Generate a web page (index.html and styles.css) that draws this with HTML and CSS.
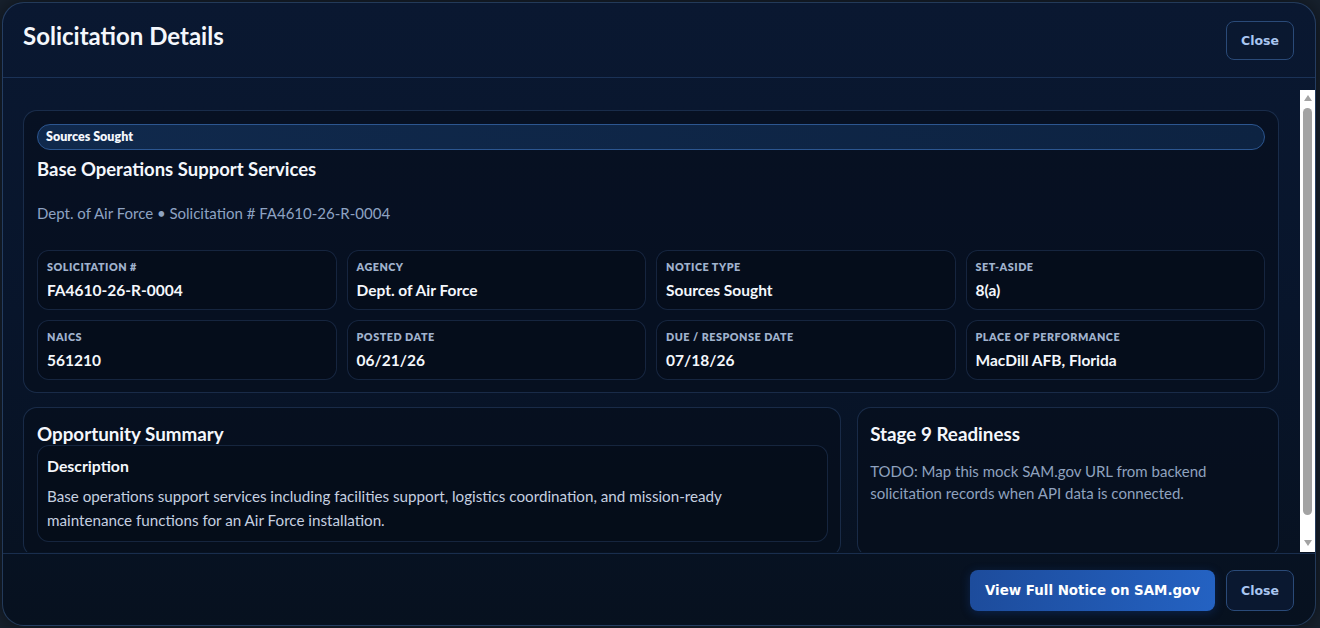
FILE: index.html
```html
<!DOCTYPE html>
<html lang="en">
<head>
<meta charset="utf-8">
<title>Solicitation Details</title>
<link rel="stylesheet" href="styles.css">
</head>
<body>
<div class="modal">
  <header class="modal-header">
    <h1 class="modal-title">Solicitation Details</h1>
    <button class="btn btn-ghost">Close</button>
  </header>
  <div class="modal-body">
    <div class="scroll">
      <section class="card card-main">
        <div class="badge">Sources Sought</div>
        <h2 class="sol-title">Base Operations Support Services</h2>
        <p class="sol-sub">Dept. of Air Force • Solicitation # FA4610-26-R-0004</p>
        <div class="facts">
          <div class="fact"><div class="fact-label">Solicitation #</div><div class="fact-value">FA4610-26-R-0004</div></div>
          <div class="fact"><div class="fact-label">Agency</div><div class="fact-value">Dept. of Air Force</div></div>
          <div class="fact"><div class="fact-label">Notice Type</div><div class="fact-value">Sources Sought</div></div>
          <div class="fact"><div class="fact-label">Set-Aside</div><div class="fact-value">8(a)</div></div>
          <div class="fact"><div class="fact-label">NAICS</div><div class="fact-value">561210</div></div>
          <div class="fact"><div class="fact-label">Posted Date</div><div class="fact-value">06/21/26</div></div>
          <div class="fact"><div class="fact-label">Due / Response Date</div><div class="fact-value">07/18/26</div></div>
          <div class="fact"><div class="fact-label">Place of Performance</div><div class="fact-value">MacDill AFB, Florida</div></div>
        </div>
      </section>
      <div class="lower">
        <section class="card card-summary">
          <h3 class="section-title">Opportunity Summary</h3>
          <div class="desc-box">
            <h4 class="desc-title">Description</h4>
            <p class="desc-text">Base operations support services including facilities support, logistics coordination, and mission-ready maintenance functions for an Air Force installation.</p>
          </div>
        </section>
        <section class="card card-stage">
          <h3 class="section-title">Stage 9 Readiness</h3>
          <p class="stage-text">TODO: Map this mock SAM.gov URL from backend solicitation records when API data is connected.</p>
        </section>
      </div>
    </div>
    <div class="scrollbar" aria-hidden="true">
      <span class="sb-arrow sb-up"></span>
      <span class="sb-thumb"></span>
      <span class="sb-arrow sb-down"></span>
    </div>
  </div>
  <footer class="modal-footer">
    <button class="btn btn-primary">View Full Notice on SAM.gov</button>
    <button class="btn btn-ghost">Close</button>
  </footer>
</div>
</body>
</html>
```
FILE: styles.css
```css
* { box-sizing: border-box; }
html, body { margin: 0; padding: 0; }
body {
  width: 1320px;
  height: 628px;
  overflow: hidden;
  background: #18222f;
  font-family: Lato, "Noto Sans", sans-serif;
  color: #f1f5fb;
  padding: 2px 4px 2px 2px;
}
.modal {
  width: 1314px;
  height: 624px;
  border: 1px solid rgba(72, 108, 160, 0.45);
  border-radius: 22px;
  background: linear-gradient(180deg, #0a1831 0%, #08152b 50%, #07111f 100%);
  display: flex;
  flex-direction: column;
  overflow: hidden;
  box-shadow: 0 0 24px rgba(0,0,0,0.6);
}
.modal-header {
  height: 75px;
  flex: none;
  display: flex;
  align-items: center;
  justify-content: space-between;
  padding: 0 21px 0 20px;
  border-bottom: 1px solid rgba(60, 100, 160, 0.35);
}
.modal-title {
  margin: 0 0 8px 0;
  font-size: 24px;
  line-height: 30px;
  font-weight: 700;
  color: #f4f7fc;
}
.btn {
  font-family: "DejaVu Sans", Verdana, sans-serif;
  font-weight: 700;
  border-radius: 8px;
  cursor: pointer;
}
.btn-ghost {
  width: 68px;
  height: 39px;
  font-size: 12.5px;
  color: #a9c6f0;
  background: #0a1830;
  border: 1px solid #2a4a78;
  padding: 0;
}
.btn-primary {
  height: 41px;
  width: 245px;
  font-size: 13.4px;
  color: #ffffff;
  border: 0;
  background: linear-gradient(90deg, #1d4c9c 0%, #2462c2 100%);
  box-shadow: 0 2px 10px rgba(20, 70, 160, 0.35);
  padding: 0;
}
.modal-footer .btn-ghost { height: 41px; }
.modal-body {
  flex: none;
  height: 475px;
  padding-top: 12px;
  display: flex;
}
.scroll {
  flex: 1;
  min-width: 0;
  height: 462px;
  overflow: hidden;
  padding: 20px 21px 0 20px;
}
.scrollbar {
  flex: none;
  width: 15px;
  height: 462px;
  background: #ffffff;
  display: flex;
  flex-direction: column;
  align-items: center;
  padding: 5px 0 6px 0;
}
.sb-arrow {
  width: 0;
  height: 0;
  border-left: 4.5px solid transparent;
  border-right: 4.5px solid transparent;
}
.sb-up { border-bottom: 6px solid #a3a3a3; }
.sb-down { border-top: 6px solid #a3a3a3; margin-top: auto; }
.sb-thumb {
  margin-top: 7px;
  width: 9px;
  height: 407px;
  border-radius: 5px;
  background: #a3a3a3;
}
.card {
  background: rgba(5, 12, 26, 0.55);
  border: 1px solid rgba(62, 96, 150, 0.35);
  border-radius: 14px;
}
.card-main { padding: 13px 13px 12px 13px; }
.badge {
  height: 26px;
  border-radius: 13px;
  border: 1px solid #2c5690;
  background: linear-gradient(90deg, #10294c 0%, #0d2342 100%);
  font-size: 12.5px;
  font-weight: 800;
  line-height: 24px;
  padding-left: 8px;
  color: #f4f7fc;
}
.sol-title {
  margin: 7px 0 0 0;
  font-size: 18.5px;
  line-height: 24px;
  font-weight: 700;
  color: #f4f7fc;
}
.sol-sub {
  margin: 22px 0 0 0;
  font-size: 15px;
  line-height: 20px;
  color: #8ea3c2;
}
.facts {
  margin-top: 27px;
  display: grid;
  grid-template-columns: repeat(4, minmax(0, 1fr));
  column-gap: 10px;
  row-gap: 10px;
}
.fact {
  height: 60px;
  border: 1px solid rgba(62, 96, 150, 0.3);
  border-radius: 12px;
  background: rgba(4, 10, 22, 0.5);
  padding: 9px 9px 0 9px;
}
.fact-label {
  font-size: 10.8px;
  line-height: 14px;
  font-weight: 800;
  letter-spacing: 0.5px;
  text-transform: uppercase;
  color: #a0b2cd;
}
.fact-value {
  margin-top: 6px;
  font-size: 15.5px;
  line-height: 20px;
  font-weight: 700;
  color: #f4f7fc;
}
.lower {
  margin-top: 14px;
  display: grid;
  grid-template-columns: minmax(0, 1.94fr) minmax(0, 1fr);
  column-gap: 16px;
}
.card-summary { padding: 15px 12px 14px 13px; }
.card-stage { padding: 15px 13px 14px 12px; }
.section-title {
  margin: 0;
  font-size: 18.8px;
  line-height: 22px;
  font-weight: 700;
  color: #f4f7fc;
}
.desc-box {
  border: 1px solid rgba(62, 96, 150, 0.3);
  border-radius: 12px;
  background: rgba(4, 10, 22, 0.45);
  padding: 10px 26px 9px 9px;
}
.desc-title {
  margin: 0;
  font-size: 15.8px;
  line-height: 20px;
  font-weight: 700;
  color: #f4f7fc;
}
.desc-text {
  margin: 8px 0 0 0;
  font-size: 15.2px;
  line-height: 24px;
  color: #c5d0e0;
}
.stage-text {
  margin: 15px 0 0 0;
  font-size: 15px;
  line-height: 22px;
  color: #8fa2bf;
}
.modal-footer {
  flex: none;
  height: 73px;
  border-top: 1px solid rgba(60, 100, 160, 0.35);
  display: flex;
  justify-content: flex-end;
  align-items: flex-start;
  gap: 11px;
  padding: 16px 21px 0 0;
}
```
